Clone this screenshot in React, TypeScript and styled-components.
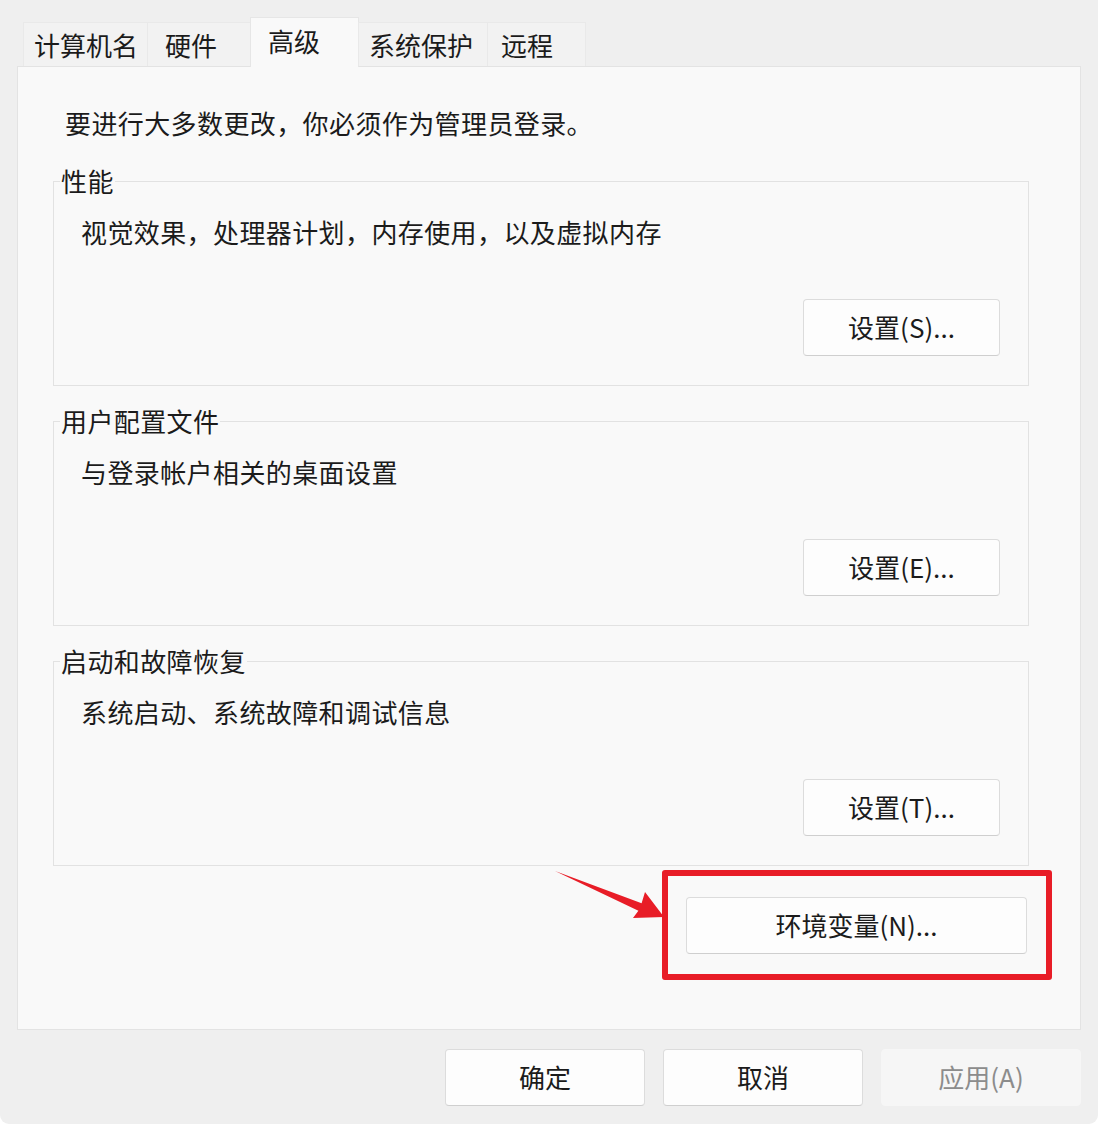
import React from "react";
import styled, { createGlobalStyle } from "styled-components";

const Global = createGlobalStyle`
  html, body { margin: 0; padding: 0; background: #ffffff; }
  body { font-family: "Noto Sans CJK SC", "Noto Sans", sans-serif; }
  * { box-sizing: border-box; }
`;

const Window = styled.div`
  width: 1098px;
  height: 1124px;
  background: #efefef;
  padding: 17px 17px 0 17px;
  display: flex;
  flex-direction: column;
  border-radius: 0 0 9px 9px;
  color: #1b1b1b;
  font-size: 26px;
  letter-spacing: 0.4px;
`;

const TabRow = styled.div`
  display: flex;
  align-items: flex-end;
  height: 50px;
  margin: 0 0 -1px 6px;
  position: relative;
  z-index: 1;
  letter-spacing: 0;
`;

const Tab = styled.div<{ $w: number; $pl: number; $active?: boolean }>`
  width: ${(p) => p.$w}px;
  height: ${(p) => (p.$active ? 50 : 44)}px;
  margin-bottom: ${(p) => (p.$active ? 0 : 1)}px;
  padding-left: ${(p) => p.$pl}px;
  display: flex;
  align-items: center;
  line-height: 36px;
  padding-bottom: ${(p) => (p.$active ? 4 : 0)}px;
  background: ${(p) => (p.$active ? "#f9f9f9" : "#f2f2f2")};
  border: 1px solid ${(p) => (p.$active ? "#e6e6e6" : "#e9e9e9")};
  border-bottom: none;
  margin-left: -1px;
  &:first-child { margin-left: 0; }
`;

const Panel = styled.div`
  height: 964px;
  background: #f9f9f9;
  border: 1px solid #e3e3e3;
  padding: 38px 51px 0 35px;
  display: flex;
  flex-direction: column;
`;

const Intro = styled.div`
  line-height: 36px;
  margin-left: 12px;
  margin-bottom: 22px;
`;

const Group = styled.fieldset`
  margin: 0 0 17px 0;
  padding: 0 28px 29px 6px;
  border: 1px solid #e2e2e2;
  min-width: 0;
  display: flex;
  flex-direction: column;
  &:last-of-type { margin-bottom: 31px; }
`;

const Legend = styled.legend`
  padding: 0 1px;
  line-height: 36px;
  font-size: 26px;
`;

const Desc = styled.div`
  line-height: 36px;
  margin: 15px 0 0 21px;
`;

const ButtonRow = styled.div<{ $mt?: number }>`
  display: flex;
  justify-content: flex-end;
  margin-top: ${(p) => p.$mt ?? 0}px;
`;

const Button = styled.button<{ $w?: number; $disabled?: boolean }>`
  width: ${(p) => p.$w ?? 197}px;
  height: 57px;
  font-family: inherit;
  font-size: 26px;
  letter-spacing: 0;
  color: ${(p) => (p.$disabled ? "#8c8c8c" : "#1b1b1b")};
  background: ${(p) => (p.$disabled ? "#f6f6f6" : "#fdfdfd")};
  border: 1px solid ${(p) => (p.$disabled ? "#f6f6f6" : "#dcdcdc")};
  border-bottom-color: ${(p) => (p.$disabled ? "#f6f6f6" : "#cfcfcf")};
  border-radius: 4px;
  padding: 0 0 2px 0;
  line-height: 36px;
`;

const EnvWrap = styled.div`
  position: relative;
  margin-right: 2px;
`;

const Highlight = styled.div`
  position: absolute;
  top: -27px;
  left: -24px;
  right: -25px;
  bottom: -26px;
  border: 6px solid #e81d27;
  border-radius: 3px;
  pointer-events: none;
`;

const Arrow = styled.svg`
  position: absolute;
  left: -135px;
  top: -30px;
  width: 116px;
  height: 56px;
  overflow: visible;
`;

const Footer = styled.div`
  display: flex;
  justify-content: flex-end;
  gap: 18px;
  margin-top: 19px;
`;

const tabs = [
  { label: "计算机名", w: 125, pl: 10 },
  { label: "硬件", w: 104, pl: 17 },
  { label: "高级", w: 109, pl: 17, active: true },
  { label: "系统保护", w: 130, pl: 10 },
  { label: "远程", w: 99, pl: 13 },
];

const groups = [
  { title: "性能", desc: "视觉效果，处理器计划，内存使用，以及虚拟内存", btn: "设置(S)..." },
  { title: "用户配置文件", desc: "与登录帐户相关的桌面设置", btn: "设置(E)..." },
  { title: "启动和故障恢复", desc: "系统启动、系统故障和调试信息", btn: "设置(T)..." },
];

export default function App() {
  return (
    <>
      <Global />
      <Window>
        <TabRow>
          {tabs.map((t) => (
            <Tab key={t.label} $w={t.w} $pl={t.pl} $active={t.active}>
              {t.label}
            </Tab>
          ))}
        </TabRow>
        <Panel>
          <Intro>要进行大多数更改，你必须作为管理员登录。</Intro>
          {groups.map((g) => (
            <Group key={g.title}>
              <Legend>{g.title}</Legend>
              <Desc>{g.desc}</Desc>
              <ButtonRow $mt={49}>
                <Button>{g.btn}</Button>
              </ButtonRow>
            </Group>
          ))}
          <ButtonRow>
            <EnvWrap>
              <Button $w={341}>环境变量(N)...</Button>
              <Highlight />
              <Arrow viewBox="0 0 116 56">
                <polygon
                  points="4,4 90.6,36.3 94,25 113,50 82,51 87.4,43.7"
                  fill="#e81d27"
                />
              </Arrow>
            </EnvWrap>
          </ButtonRow>
        </Panel>
        <Footer>
          <Button $w={200}>确定</Button>
          <Button $w={200}>取消</Button>
          <Button $w={200} $disabled>
            应用(A)
          </Button>
        </Footer>
      </Window>
    </>
  );
}
